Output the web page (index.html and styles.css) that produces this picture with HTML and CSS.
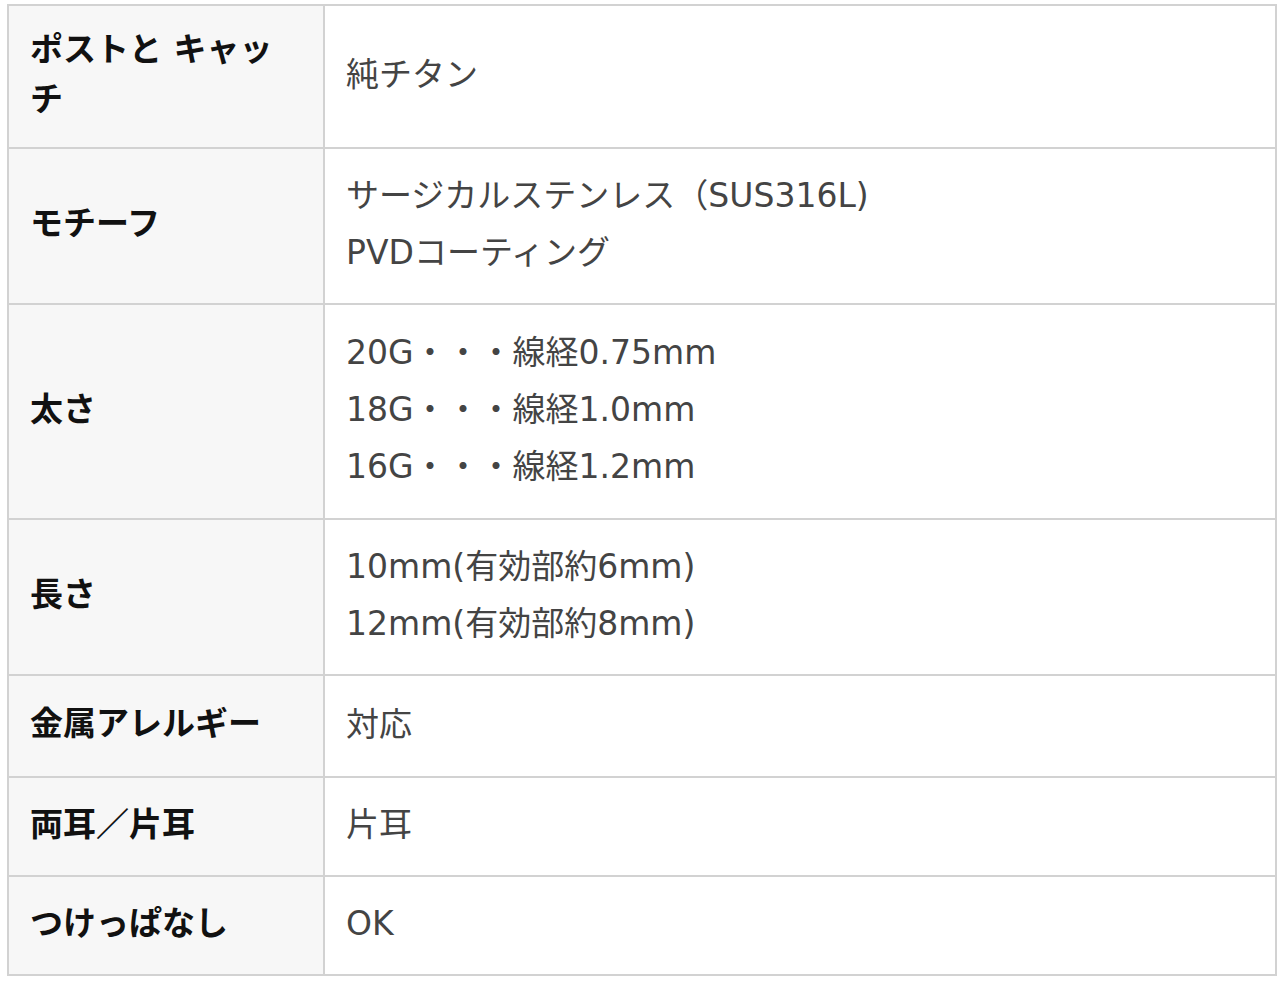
FILE: index.html
```html
<!DOCTYPE html>
<html lang="ja">
<head>
<meta charset="utf-8">
<title>仕様</title>
<link rel="stylesheet" href="styles.css">
</head>
<body>
<table class="spec">
  <tbody>
    <tr class="r1">
      <th>ポストと キャッチ</th>
      <td>純チタン</td>
    </tr>
    <tr class="r2">
      <th>モチーフ</th>
      <td>サージカルステンレス（SUS316L)<br>PVDコーティング</td>
    </tr>
    <tr class="r3">
      <th>太さ</th>
      <td>20G・・・線経0.75mm<br>18G・・・線経1.0mm<br>16G・・・線経1.2mm</td>
    </tr>
    <tr class="r4">
      <th>長さ</th>
      <td>10mm(有効部約6mm)<br>12mm(有効部約8mm)</td>
    </tr>
    <tr class="r5">
      <th>金属アレルギー</th>
      <td>対応</td>
    </tr>
    <tr class="r6">
      <th>両耳／片耳</th>
      <td>片耳</td>
    </tr>
    <tr class="r7">
      <th>つけっぱなし</th>
      <td>OK</td>
    </tr>
  </tbody>
</table>
</body>
</html>
```
FILE: styles.css
```css
html, body {
  background: #ffffff;
}
body {
  margin: 4px 3px 0 7px;
  font-family: "DejaVu Sans", "Noto Sans CJK JP", sans-serif;
}
.spec {
  width: 1270px;
  border-collapse: collapse;
  border: 2px solid #d2d2d2;
}
.spec th,
.spec td {
  border: 2px solid #d2d2d2;
  padding: 18px 21px 22px;
  vertical-align: middle;
  text-align: left;
  font-size: 33px;
}
.spec th {
  width: 262px;
  padding-right: 31px;
  background: #f7f7f7;
  color: #111111;
  font-weight: bold;
  line-height: 50px;
}
.spec td {
  color: #444444;
  font-weight: normal;
  line-height: 57px;
}
.spec .r1 { height: 143px; }
.spec .r2 { height: 155px; }
.spec .r3 { height: 215px; }
.spec .r4 { height: 154px; }
.spec .r5 { height: 102px; }
.spec .r6 { height: 99px; }
.spec .r7 { height: 98px; }
```
